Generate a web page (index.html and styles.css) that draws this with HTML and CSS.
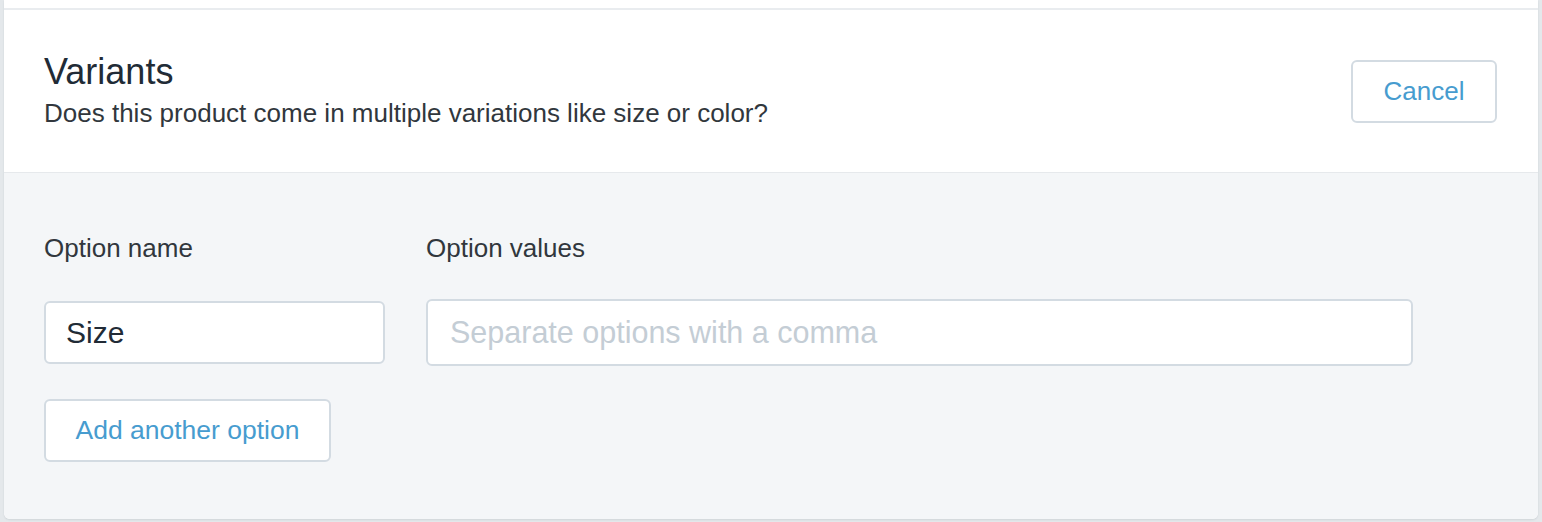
FILE: index.html
```html
<!DOCTYPE html>
<html>
<head>
<meta charset="utf-8">
<link rel="stylesheet" href="styles.css">
</head>
<body>
<div class="card">
  <div class="prev"></div>
  <div class="header">
    <div class="titles">
      <h2 class="title">Variants</h2>
      <p class="subtitle">Does this product come in multiple variations like size or color?</p>
    </div>
    <button class="btn cancel">Cancel</button>
  </div>
  <div class="body">
    <div class="grid">
      <label class="label">Option name</label>
      <label class="label">Option values</label>
      <div></div>
      <div class="input name-input">Size</div>
      <div class="input values-input"><span class="placeholder">Separate options with a comma</span></div>
      <div></div>
    </div>
    <button class="btn add">Add another option</button>
  </div>
</div>
</body>
</html>
```
FILE: styles.css
```css
html, body {
  margin: 0;
  padding: 0;
}
body {
  background: #e4e8eb;
  font-family: "Liberation Sans", Arial, sans-serif;
  padding: 0 4px 4px 4px;
  width: 1542px;
  height: 522px;
  box-sizing: border-box;
  overflow: hidden;
}
.card {
  background: #ffffff;
  border-radius: 0 0 6px 6px;
  overflow: hidden;
  box-shadow: 0 1px 2px rgba(60, 70, 80, 0.12);
}
.prev {
  height: 8px;
  border-bottom: 2px solid #e9ecef;
}
.header {
  display: flex;
  align-items: center;
  justify-content: space-between;
  padding: 0 40px;
  height: 163px;
  border-bottom: 1px solid #e6e9ec;
  box-sizing: border-box;
}
.titles {
  margin-top: -2px;
}
.title {
  margin: 0;
  font-size: 36px;
  line-height: 40px;
  font-weight: normal;
  color: #212b36;
}
.subtitle {
  margin: 5px 0 0 0;
  font-size: 26px;
  line-height: 32px;
  color: #31373d;
}
.btn {
  font-family: "Liberation Sans", Arial, sans-serif;
  background: #ffffff;
  border: 2px solid #d3dbe2;
  border-radius: 6px;
  color: #479ccf;
  font-size: 26px;
  cursor: pointer;
  box-sizing: border-box;
}
.cancel {
  width: 146px;
  height: 63px;
  margin-right: 1px;
}
.body {
  background: #f4f6f8;
  padding: 54px 40px 57px 40px;
}
.grid {
  display: grid;
  grid-template-columns: 341px 987px 1fr;
  column-gap: 41px;
  row-gap: 30px;
  align-items: center;
}
.label {
  font-size: 26px;
  line-height: 42px;
  color: #31373d;
}
.input {
  background: #ffffff;
  border: 2px solid #d3dbe2;
  border-radius: 6px;
  box-sizing: border-box;
  display: flex;
  align-items: center;
  font-size: 30px;
  color: #212b36;
}
.name-input {
  height: 63px;
  padding-left: 20px;
}
.values-input {
  height: 67px;
  padding-left: 22px;
  font-size: 30.5px;
}
.placeholder {
  color: #c4cdd5;
}
.add {
  margin-top: 33px;
  width: 287px;
  height: 63px;
  padding: 0;
  font-size: 26.5px;
}
```
